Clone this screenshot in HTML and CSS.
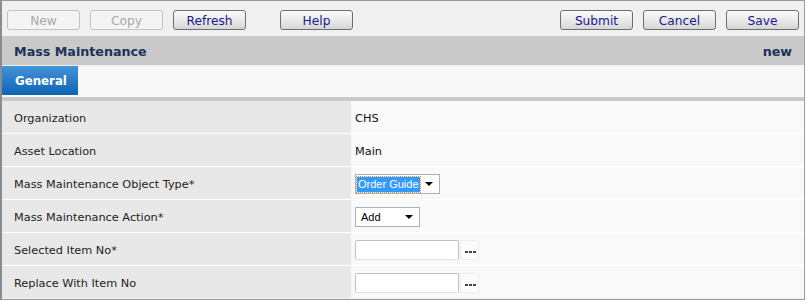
FILE: index.html
```html
<!DOCTYPE html>
<html lang="en">
<head>
  <meta charset="UTF-8">
  <title>Mass Maintenance</title>
  <link rel="stylesheet" href="styles.css">
</head>
<body>
  <div class="frame">
    <div class="toolbar">
      <button class="btn" disabled>New</button>
      <button class="btn" disabled>Copy</button>
      <button class="btn">Refresh</button>
      <button class="btn help">Help</button>
      <div class="toolbar-right">
        <button class="btn">Submit</button>
        <button class="btn">Cancel</button>
        <button class="btn">Save</button>
      </div>
    </div>

    <div class="header">
      <span class="title">Mass Maintenance</span>
      <span class="status">new</span>
    </div>

    <div class="tabs">
      <div class="tab">General</div>
    </div>

    <div class="form">
      <div class="row">
        <div class="label">Organization</div>
        <div class="value">CHS</div>
      </div>
      <div class="row">
        <div class="label">Asset Location</div>
        <div class="value">Main</div>
      </div>
      <div class="row">
        <div class="label">Mass Maintenance Object Type*</div>
        <div class="value">
          <div class="select select-wide">
            <span class="sel-text focused">Order Guide</span>
            <span class="arrow"></span>
          </div>
        </div>
      </div>
      <div class="row">
        <div class="label">Mass Maintenance Action*</div>
        <div class="value">
          <div class="select select-small">
            <span class="sel-text">Add</span>
            <span class="arrow"></span>
          </div>
        </div>
      </div>
      <div class="row">
        <div class="label">Selected Item No*</div>
        <div class="value">
          <input type="text" class="field">
          <span class="lookup"><i></i><i></i><i></i></span>
        </div>
      </div>
      <div class="row">
        <div class="label">Replace With Item No</div>
        <div class="value">
          <input type="text" class="field">
          <span class="lookup"><i></i><i></i><i></i></span>
        </div>
      </div>
    </div>
  </div>
</body>
</html>
```

FILE: styles.css
```css
body { margin: 0; background: #fff; font-family: "DejaVu Sans", Verdana, sans-serif; }
.frame { width: 805px; box-sizing: border-box; border: 1px solid #9a9a9a; border-left: 2px solid #8c8c8c; background: #f0f0f0; }

.toolbar { display: flex; height: 35px; padding: 9px 5px 0 5px; box-sizing: border-box; background: #f0f0f0; }
.toolbar-right { display: flex; margin-left: auto; }
.btn { width: 73px; height: 20px; margin-right: 10px; padding: 1px 0 0; font-family: "DejaVu Sans", Verdana, sans-serif; font-size: 12.2px; color: #1a1a8c; background: linear-gradient(#fbfbfb, #e6e6e6 60%, #d6d6d6); border: 1px solid #6f6f6f; border-radius: 3px; }
.toolbar-right .btn:last-child { margin-right: 0; }
.btn:disabled { color: #a8a8a8; border-color: #c2c2c2; background: #f4f4f4; }
.btn.help { margin-left: 24px; }

.header { display: flex; justify-content: space-between; height: 29px; line-height: 31px; padding: 0 12px; box-sizing: border-box; background: #c8c9c8; color: #1b3358; font-weight: bold; font-size: 12.7px; }

.tabs { height: 31px; background: #f8f8f8; }
.tab { width: 76px; height: 29px; margin-top: 1px; box-sizing: border-box; padding-left: 13px; line-height: 30px; color: #fff; font-weight: bold; font-size: 11.8px; background: linear-gradient(#4393d8, #0f64b4); }

.form { border-top: 4px solid #c8c9c8; }
.row { display: grid; grid-template-columns: 349px 1fr; height: 33px; border-bottom: 1px solid #fff; box-sizing: border-box; }
.row:last-child { border-bottom: 1px solid #f0f0f0; }
.label { display: flex; align-items: center; padding: 2px 0 0 12px; background: #e8e8e8; font-size: 11.3px; color: #222; }
.value { display: flex; align-items: center; padding: 2px 0 0 4px; background: #f9f9f9; font-size: 11.3px; color: #111; }

.select { display: flex; align-items: center; justify-content: space-between; height: 20px; box-sizing: border-box; padding: 0 4px 0 1px; border: 1px solid #a8b0b8; background: #fff; font-family: "Liberation Sans", Arial, sans-serif; font-size: 11px; color: #000; }
.select-wide { width: 85px; }
.select-small { width: 65px; padding-left: 4px; }
.sel-text { line-height: 15px; padding: 0 1px; }
.sel-text.focused { background: #3399ff; color: #fff; outline: 1px dotted #d58a3c; }
.arrow { width: 0; height: 0; border-top: 4px solid #000; border-left: 4px solid transparent; border-right: 4px solid transparent; margin-right: 2px; }

.field { width: 104px; height: 20px; box-sizing: border-box; margin: 0; border: 1px solid #c0c0c0; border-bottom-color: #d8e0ea; border-radius: 2px; background: #fff; }
.lookup { display: flex; align-items: flex-end; gap: 1px; width: 19px; height: 20px; box-sizing: border-box; padding: 0 0 6px 4px; margin-left: 1px; border: 1px solid #eeeeee; background: #fbfbfb; }
.lookup i { display: block; width: 3px; height: 2px; background: #444; }
```
